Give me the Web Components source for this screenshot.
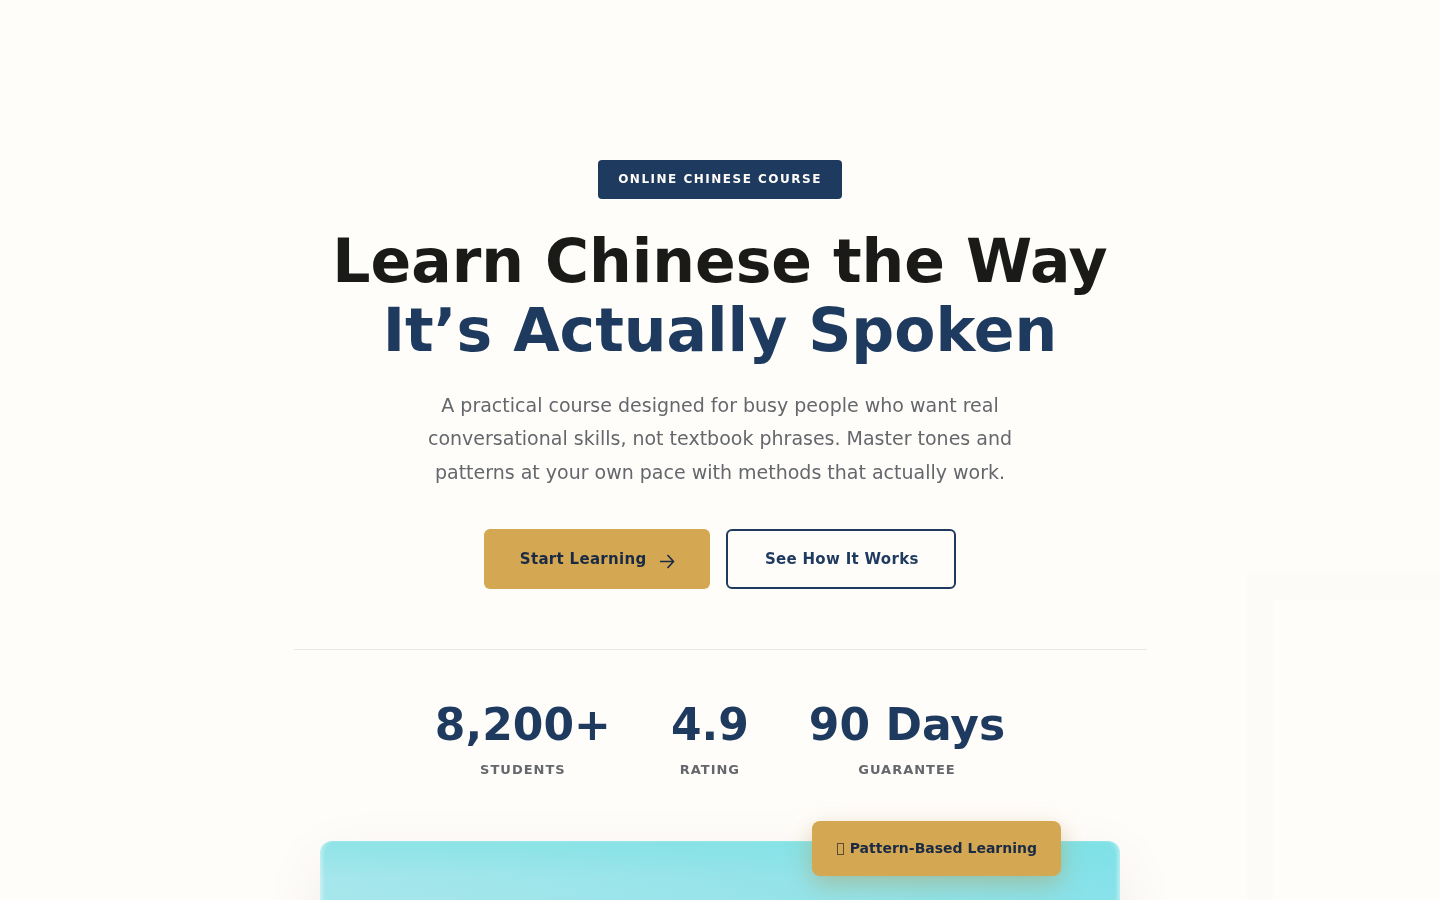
<!DOCTYPE html>
<html lang="en">
<head>
<meta charset="utf-8">
<title>Learn Chinese</title>
<style>
  html, body {
    margin: 0;
    height: 100%;
    overflow: hidden;
    background: #fffdfa;
    font-family: "DejaVu Sans", sans-serif;
  }
</style>
</head>
<body>
<hero-section>
  <hero-badge slot="badge">Online Chinese Course</hero-badge>
  <span slot="title">Learn Chinese the Way</span>
  <span slot="accent">It’s Actually Spoken</span>
  <span slot="lead">A practical course designed for busy people who want real conversational skills, not textbook phrases. Master tones and patterns at your own pace with methods that actually work.</span>
  <hero-button slot="actions" variant="primary" arrow>Start Learning</hero-button>
  <hero-button slot="actions" variant="outline">See How It Works</hero-button>
  <hero-stat slot="stats" label="Students">8,200+</hero-stat>
  <hero-stat slot="stats" label="Rating">4.9</hero-stat>
  <hero-stat slot="stats" label="Guarantee">90 Days</hero-stat>
  <hero-visual slot="visual" tag="Pattern-Based Learning"></hero-visual>
</hero-section>

<script>
class HeroSection extends HTMLElement {
  constructor() {
    super();
    this.attachShadow({ mode: "open" });
    this.shadowRoot.innerHTML = `
      <style>
        :host {
          display: block;
          position: relative;
          height: 900px;
          overflow: hidden;
          padding-top: 160px;
          box-sizing: border-box;
          text-align: center;
        }
        .frame {
          position: absolute;
          left: 1247px;
          top: 572px;
          width: 400px;
          height: 400px;
          box-sizing: border-box;
          border: 28px solid #fcfbf8;
          border-left-width: 26px;
          border-radius: 4px;
        }
        .inner {
          position: relative;
          display: flex;
          flex-direction: column;
          align-items: center;
          will-change: transform;
        }
        h1 {
          margin: 28px 0 0;
          font-size: 60px;
          line-height: 69px;
          font-weight: 700;
          color: #1a1a18;
          letter-spacing: 0;
        }
        h1 em {
          display: block;
          font-style: normal;
          color: #1e3a5f;
        }
        p {
          margin: 24px 0 0;
          width: 600px;
          font-size: 19px;
          line-height: 33.25px;
          color: #64676b;
        }
        .actions {
          display: flex;
          gap: 16px;
          margin-top: 40px;
        }
        .stats {
          display: flex;
          justify-content: center;
          gap: 60px;
          width: 853px;
          margin-top: 60px;
          padding-top: 48px;
          border-top: 1px solid #ebe9e5;
        }
        .visual { margin-top: 64px; }
      </style>
      <div class="frame"></div>
      <div class="inner">
        <slot name="badge"></slot>
        <h1><slot name="title"></slot><em><slot name="accent"></slot></em></h1>
        <p><slot name="lead"></slot></p>
        <div class="actions"><slot name="actions"></slot></div>
        <div class="stats"><slot name="stats"></slot></div>
        <div class="visual"><slot name="visual"></slot></div>
      </div>
    `;
  }
}

class HeroBadge extends HTMLElement {
  constructor() {
    super();
    this.attachShadow({ mode: "open" });
    this.shadowRoot.innerHTML = `
      <style>
        :host {
          display: inline-block;
          padding: 10px 20px;
          background: #1e3a5f;
          color: #fffdfa;
          border-radius: 4px;
          font-size: 12px;
          line-height: 19px;
          font-weight: 700;
          letter-spacing: 1.5px;
          text-transform: uppercase;
        }
      </style>
      <slot></slot>
    `;
  }
}

class HeroButton extends HTMLElement {
  constructor() {
    super();
    this.attachShadow({ mode: "open" });
    const arrow = this.hasAttribute("arrow")
      ? `<svg width="16" height="16" viewBox="0 0 16 16" fill="none" stroke="currentColor" stroke-width="1.6"><path d="M3 10.5h13M10.5 4l6 6.5-6 6.5"/></svg>`
      : "";
    this.shadowRoot.innerHTML = `
      <style>
        :host {
          display: inline-flex;
          align-items: center;
          justify-content: center;
          gap: 12px;
          height: 60px;
          box-sizing: border-box;
          padding: 0 36px;
          border-radius: 6px;
          font-size: 15px;
          font-weight: 700;
          letter-spacing: 0.3px;
        }
        :host([variant="primary"]) {
          background: #d4a853;
          color: #1a2a44;
        }
        :host([variant="outline"]) {
          border: 2px solid #1e3a5f;
          color: #1e3a5f;
          padding: 0 35.5px 0 36.5px;
        }
        svg { overflow: visible; margin: 0 1px 0 -1px; }
      </style>
      <slot></slot>${arrow}
    `;
  }
}

class HeroStat extends HTMLElement {
  constructor() {
    super();
    this.attachShadow({ mode: "open" });
    this.shadowRoot.innerHTML = `
      <style>
        :host {
          display: block;
          text-align: center;
        }
        .value {
          font-size: 44px;
          line-height: 54px;
          font-weight: 700;
          color: #1e3a5f;
        }
        .label {
          margin-top: 10px;
          font-size: 13px;
          line-height: 15px;
          font-weight: 700;
          letter-spacing: 1px;
          text-transform: uppercase;
          color: #64676b;
        }
      </style>
      <div class="value"><slot></slot></div>
      <div class="label">${this.getAttribute("label")}</div>
    `;
  }
}

class HeroVisual extends HTMLElement {
  constructor() {
    super();
    this.attachShadow({ mode: "open" });
    this.shadowRoot.innerHTML = `
      <style>
        :host {
          display: block;
          position: relative;
          width: 800px;
          height: 450px;
          border-radius: 12px;
          background:
            linear-gradient(to bottom, rgba(125, 226, 226, 0.55), rgba(125, 226, 226, 0) 36px),
            linear-gradient(20deg, #c6eef2 0%, #a2e6eb 60%, #92e3e9 80%, #80e1ea 100%);
          box-shadow: 0 20px 60px rgba(60, 50, 30, 0.08),
            inset 4px 0 4px -2px rgba(255, 255, 255, 0.5),
            inset -4px 0 4px -2px rgba(255, 255, 255, 0.5);
        }
        .tag {
          position: absolute;
          top: -20px;
          right: 59px;
          padding: 18px 24px;
          background: #d4a853;
          color: #1a2a44;
          border-radius: 8px;
          font-size: 14px;
          line-height: 19px;
          font-weight: 700;
          box-shadow: 0 8px 24px rgba(180, 140, 60, 0.4);
          white-space: nowrap;
        }
        /* missing-glyph box in front of the label */
        .tofu {
          display: inline-block;
          width: 7.6px;
          height: 12px;
          margin: 0 5.4px 0 1px;
          vertical-align: -2px;
          box-sizing: border-box;
          border: 1px solid #5b4a35;
        }
      </style>
      <div class="tag"><span class="tofu"></span>${this.getAttribute("tag")}</div>
    `;
  }
}

customElements.define("hero-section", HeroSection);
customElements.define("hero-badge", HeroBadge);
customElements.define("hero-button", HeroButton);
customElements.define("hero-stat", HeroStat);
customElements.define("hero-visual", HeroVisual);
</script>
</body>
</html>
